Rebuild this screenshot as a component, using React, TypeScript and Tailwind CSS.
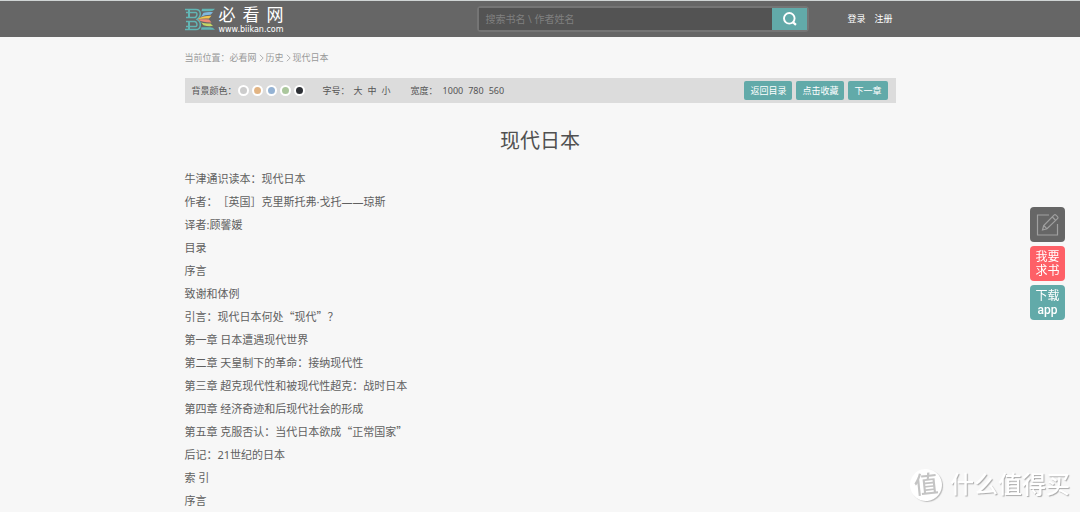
import { useState, type ReactNode } from "react";

const swatches = [
  { name: "灰色", color: "bg-[#cccccc]" },
  { name: "橙色", color: "bg-[#e2b483]" },
  { name: "蓝色", color: "bg-[#94b2d3]" },
  { name: "绿色", color: "bg-[#abc79d]" },
  { name: "黑色", color: "bg-[#2e3136]" },
];

// full-width Chinese quotation marks
function Quoted({ children }: { children: ReactNode }) {
  return <span className="font-['Noto_Sans_CJK_SC',sans-serif]">“{children}”</span>;
}

const lines: ReactNode[] = [
  "牛津通识读本：现代日本",
  "作者：［英国］克里斯托弗·戈托——琼斯",
  "译者:顾馨媛",
  "目录",
  "序言",
  "致谢和体例",
  <>
    引言：现代日本何处<Quoted>现代</Quoted>？
  </>,
  "第一章 日本遭遇现代世界",
  "第二章 天皇制下的革命：接纳现代性",
  "第三章 超克现代性和被现代性超克：战时日本",
  "第四章 经济奇迹和后现代社会的形成",
  <>
    第五章 克服否认：当代日本欲成<Quoted>正常国家</Quoted>
  </>,
  "后记：21世纪的日本",
  "索 引",
  "序言",
];

function Logo() {
  return (
    <a href="#" className="flex items-center gap-1 text-white">
      <svg width="30" height="23" viewBox="0 0 30 23" fill="none">
        <g stroke="#62b5b4" strokeWidth="1.500">
          <path d="M0 1.400h11c5 0 6 6.500 1 9.900C17 14 16 21.600 11 21.600H0" />
          <path d="M1 4.500h9.500c2.500 0 1.500 5-1 5H1M1 13.500h8.500c2.500 0 3.500 5 1 5H1" />
          <path d="M4 1.500v8M4 13.500v8" strokeWidth="2" />
        </g>
        <path d="M17 .8h13c-1.500 1.900-3 2.400-5 2.400h-8.500z" fill="#62b5b4" />
        <path d="M18.500 4.800c3.500-.9 6-.9 9.500-.6l-2.500 2.600c-4 0-6.500.8-9.500 2.200z" fill="#7fb9df" />
        <path d="M13 11c3.500-2.400 8-3.300 13.500-3.200L24 10.600c-4.500-.2-8 0-11 .4z" fill="#f3c44f" />
        <path d="M13 11.500c3.500-.3 7-.3 11 0l2.500 3c-5.500.1-10-.6-13.500-3z" fill="#f08a76" />
        <path d="M16 14.200c3 1.200 6 1.500 9.500 1.400l2.500 2.400c-3.500.3-6.500.2-9.500-.8z" fill="#c5d765" />
        <path d="M16.500 19.200H25c2 0 3.500.7 5 2.600H16z" fill="#62b5b4" />
      </svg>
      <span className="flex flex-col font-['Roboto','Noto_Sans_CJK_SC',sans-serif]">
        <span className="flex justify-between text-[17px] leading-5">
          <span>必</span>
          <span>看</span>
          <span>网</span>
        </span>
        <span className="font-['DejaVu_Sans',sans-serif] text-[8px] leading-[9px]">
          www.biikan.com
        </span>
      </span>
    </a>
  );
}

function Header() {
  return (
    <header className="border-t border-[#cfd4d4] bg-[#666666]">
      <div className="mx-auto flex h-9 max-w-[711px] items-center">
        <Logo />
        <form
          className="ml-auto flex h-[26px] w-[332px] rounded-sm border-2 border-[#757575]"
          onSubmit={(e) => e.preventDefault()}
        >
          <input
            type="text"
            aria-label="搜索"
            placeholder="搜索书名 \ 作者姓名"
            className="min-w-0 flex-1 bg-[#535353] px-1.5 text-[10px] text-white outline-none placeholder:text-[#808080]"
          />
          <button
            type="submit"
            aria-label="搜索"
            className="flex w-[35px] items-center justify-center bg-[#62aaa9]"
          >
            <svg width="14" height="14" viewBox="0 0 14 14" fill="none" stroke="#fff">
              <circle cx="6.300" cy="6.300" r="5.300" strokeWidth="1.900" />
              <path d="M9.500 9.800l3.500 3" strokeWidth="2.200" />
            </svg>
          </button>
        </form>
        <nav className="ml-[38px] mr-[3px] flex gap-[9px] text-[9px] text-white">
          <a href="#">登录</a>
          <a href="#">注册</a>
        </nav>
      </div>
    </header>
  );
}

function Chevron() {
  return (
    <svg width="5" height="8" viewBox="0 0 5 8" fill="none" stroke="#aaa" strokeWidth="0.9">
      <path d="M0.800 0.800L4.200 4L0.800 7.200" />
    </svg>
  );
}

function Toolbar({ setBackground }: { setBackground: (color: string) => void }) {
  return (
    <div className="flex flex-wrap items-center bg-[#dcdcdc] py-[3px] pl-[7px] pr-2 text-[9px] leading-[19px] text-[#555]">
      <span>背景颜色：</span>
      <div className="ml-px flex gap-[3px]">
        {swatches.map(({ name, color }) => (
          <button
            key={name}
            type="button"
            aria-label={name}
            className={`size-[11px] rounded-full border-2 border-white ${color}`}
            onClick={() => setBackground(color)}
          />
        ))}
      </div>
      <span className="ml-[18px]">字号：</span>
      <div className="ml-1 flex gap-[5px]">
        <button type="button">大</button>
        <button type="button">中</button>
        <button type="button">小</button>
      </div>
      <span className="ml-5">宽度：</span>
      <div className="ml-[5px] flex gap-[5px]">
        <button type="button">1000</button>
        <button type="button">780</button>
        <button type="button">560</button>
      </div>
      <div className="ml-auto flex gap-1 text-white">
        <a href="#" className="rounded-xs bg-[#62aaa9] px-[6px]">
          返回目录
        </a>
        <a href="#" className="rounded-xs bg-[#62aaa9] px-[6px]">
          点击收藏
        </a>
        <a href="#" className="rounded-xs bg-[#62aaa9] px-[6px]">
          下一章
        </a>
      </div>
    </div>
  );
}

function SideButtons() {
  return (
    <div className="fixed right-[15px] top-[207px] flex flex-col gap-1 text-center font-['Roboto','Noto_Sans_CJK_SC',sans-serif] text-xs leading-[14px] text-white">
      <button
        type="button"
        aria-label="反馈"
        className="flex size-[35px] items-center justify-center rounded-sm bg-[#666666]"
      >
        <svg width="23" height="23" viewBox="0 0 23 23" fill="none" stroke="#a0a0a0" strokeWidth="1.200">
          <path d="M13 2H1.500v20h20V11" />
          <path d="M6.500 17l1.200-4.500L18 2.200c.6-.6 1.500-.5 2 0l1.500 1.500c.6.6.6 1.400 0 2L11 15.800z" />
          <path d="M16.300 4l3.400 3.400M7.700 12.500l3.300 3.300" />
        </svg>
      </button>
      <button type="button" className="size-[35px] rounded-sm bg-[#fe6067]">
        我要
        <br />
        求书
      </button>
      <button type="button" className="size-[35px] rounded-sm bg-[#62aaa9]">
        下载
        <br />
        <span className="font-medium">app</span>
      </button>
    </div>
  );
}

function Watermark() {
  return (
    <div className="pointer-events-none fixed bottom-[11px] right-[10px] flex items-center gap-2 font-['Roboto','Noto_Sans_CJK_SC',sans-serif] text-2xl leading-8 text-white">
      <span className="flex size-8 -rotate-6 items-center justify-center rounded-full bg-white font-medium text-[#c4c4c4] shadow-[1px_1px_1px_#bbb]">
        值
      </span>
      <span className="font-medium [text-shadow:1px_1px_1px_#aaa]">什么值得买</span>
    </div>
  );
}

export default function App() {
  const [background, setBackground] = useState<string>("bg-[#f7f7f7]");

  return (
    <div className={`min-h-screen font-['Noto_Sans','Noto_Sans_CJK_SC',sans-serif] ${background}`}>
      <Header />
      <main className="mx-auto max-w-[711px]">
        <nav className="flex h-[41px] items-center gap-[2px] text-[9px] text-[#999]">
          <span>
            当前位置：<a href="#">必看网</a>
          </span>
          <Chevron />
          <a href="#">历史</a>
          <Chevron />
          <span>现代日本</span>
        </nav>
        <Toolbar setBackground={setBackground} />
        <h1 className="mt-6 text-center text-xl leading-7 text-[#505050]">现代日本</h1>
        <article className="mt-3 text-[11px] leading-[23px] text-[#606060] [text-spacing-trim:space-all]">
          {lines.map((line, i) => (
            <p key={i}>{line}</p>
          ))}
        </article>
      </main>
      <SideButtons />
      <Watermark />
    </div>
  );
}
